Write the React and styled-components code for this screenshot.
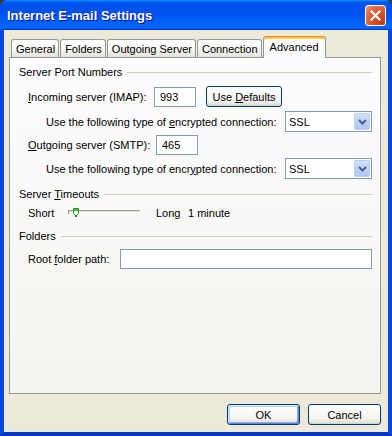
import React from 'react'
import styled, {createGlobalStyle, css} from 'styled-components'

const GlobalStyle = createGlobalStyle`
html, body {
  margin:0;
  padding:0;
  background:#3a3a3a;
}
body {
  font-family:"Liberation Sans", Arial, sans-serif;
  font-size:11px;
  color:#000;
}
u {
  text-underline-offset:1px;
}
`

const Window = styled.div`
width:392px;
height:436px;
display:flex;
flex-direction:column;
`

const TitleBar = styled.div`
height:30px;
flex:none;
box-sizing:border-box;
display:flex;
align-items:center;
justify-content:space-between;
padding:0 6px 0 7px;
border-radius:7px 7px 0 0;
background:linear-gradient(180deg, #0997ff, #0053ee 8%, #0050ee 40%, #0066ff 88%, #0066ff 93%, #005bff 95%, #003dd7 96%, #003dd7);
`

const Title = styled.div`
color:#fff;
font-weight:bold;
font-size:13px;
text-shadow:1px 1px 0 #0f1089;
margin-top:1px;
`

const CloseButton = styled.div`
width:21px;
height:21px;
box-sizing:border-box;
border:1px solid #fff;
border-radius:3px;
display:flex;
align-items:center;
justify-content:center;
background:radial-gradient(circle at 85% 85%, #c43a10 0%, #d9542a 45%, #e0704c 75%, #f0a88e 100%);
`

const Client = styled.div`
flex:1;
display:flex;
flex-direction:column;
background:#ece9d8;
border:4px solid #0a48dc;
border-top:none;
border-bottom-color:#0636c0;
padding:6px 7px 7px 5px;
`

const TabStrip = styled.div`
display:flex;
align-items:flex-end;
height:21px;
padding-left:2px;
`

const Tab = styled.div`
box-sizing:border-box;
height:18px;
padding:0 3px 0 4px;
margin-right:1px;
display:flex;
align-items:center;
border:1px solid #919b9c;
border-bottom:none;
border-radius:3px 3px 0 0;
background:linear-gradient(180deg, #ffffff 0%, #f4f4f0 55%, #e4e3dc 100%);
${p => p.$active && css`
  height:22px;
  margin-bottom:-1px;
  padding:0 6px 2px;
  position:relative;
  z-index:1;
  border-top:1px solid #e68b2c;
  background:#fcfcfe;
  box-shadow:inset 0 2px 0 #ffc83c;
`}
`

const Panel = styled.div`
flex:1;
box-sizing:border-box;
display:flex;
flex-direction:column;
border:1px solid #919b9c;
padding:7px 8px 0 9px;
background:linear-gradient(180deg, #fcfcfe 0%, #f4f3ee 100%);
`

const GroupHeader = styled.div`
display:flex;
align-items:center;
height:14px;
margin-top:${p => p.$top || 0}px;
&::after {
  content:'';
  flex:1;
  height:1px;
  margin-left:5px;
  background:#d0d0bf;
}
`

const Row = styled.div`
display:flex;
align-items:center;
height:${p => p.$h || 21}px;
margin-top:${p => p.$top || 0}px;
padding-left:${p => p.$indent || 9}px;
`

const Label = styled.span`
flex:none;
white-space:nowrap;
${p => p.$w && css`width:${p.$w}px;`}
${p => p.$left && css`margin-left:${p.$left}px;`}
`

const TextBox = styled.div`
box-sizing:border-box;
height:20px;
width:${p => p.$w ? p.$w + 'px' : 'auto'};
${p => p.$grow && css`flex:1;`}
display:flex;
align-items:center;
padding-left:5px;
border:1px solid #7f9db9;
background:#fff;
`

const Button = styled.div`
box-sizing:border-box;
width:${p => p.$w || 73}px;
height:21px;
margin-left:${p => p.$left || 0}px;
display:flex;
align-items:center;
justify-content:center;
white-space:pre;
border:1px solid #003c74;
border-radius:3px;
background:linear-gradient(180deg, #ffffff 0%, #f4f4f0 70%, #e6e4dc 90%, #d6d0c5 100%);
${p => p.$default && css`
  box-shadow:inset 1px 1px 0 #cee7ff, inset -1px -1px 0 #6982ee, inset 2px 2px 0 #bcd4f6, inset -2px -2px 0 #89ade4;
`}
`

const Select = styled.div`
box-sizing:border-box;
width:87px;
height:21px;
margin-left:auto;
display:flex;
align-items:center;
padding:1px;
border:1px solid #7f9db9;
background:#fff;
`

const SelectText = styled.span`
flex:1;
padding-left:2px;
`

const DropButton = styled.div`
box-sizing:border-box;
width:16px;
height:17px;
display:flex;
align-items:center;
justify-content:center;
border:1px solid #bccdf6;
border-radius:2px;
background:linear-gradient(180deg, #d4e1fd 0%, #bcd0fa 50%, #b0c6f6 100%);
`

const Footer = styled.div`
display:flex;
justify-content:flex-end;
gap:8px;
margin-top:10px;
`

function Chevron(){
    return (
        <svg width="9" height="6" viewBox="0 0 9 6">
            <polyline points="1,1 4.5,4.5 8,1" fill="none" stroke="#4d6185" strokeWidth="2"/>
        </svg>
    )
}

function Combo({value}){
    return (
        <Select>
            <SelectText>{value}</SelectText>
            <DropButton><Chevron/></DropButton>
        </Select>
    )
}

function Slider(){
    return (
        <svg width="72" height="10" viewBox="0 0 72 10">
            <rect x="0" y="2" width="72" height="1" fill="#9d9c99"/>
            <rect x="1" y="3" width="71" height="1" fill="#e2e1db"/>
            <rect x="0" y="4" width="72" height="1" fill="#ffffff"/>
            <rect x="0" y="2" width="1" height="4" fill="#9d9c99"/>
            <path d="M5.5 0.5 h5 v5 l-2.5 2.5 l-2.5 -2.5 z" fill="#fff" stroke="#1f8f1f" strokeWidth="1"/>
            <rect x="6" y="1" width="4" height="2" fill="#3cc63c"/>
            <rect x="7" y="7" width="2" height="2" fill="#1f7a1f"/>
        </svg>
    )
}

function CloseIcon(){
    return (
        <svg width="11" height="11" viewBox="0 0 11 11">
            <path d="M1.5 1.5 L9.5 9.5 M9.5 1.5 L1.5 9.5" stroke="#fff" strokeWidth="2.2" strokeLinecap="square"/>
        </svg>
    )
}

export default function App(){
    const tabs = ['General', 'Folders', 'Outgoing Server', 'Connection', 'Advanced']
    return (
        <Window>
            <GlobalStyle/>
            <TitleBar>
                <Title>Internet E-mail Settings</Title>
                <CloseButton><CloseIcon/></CloseButton>
            </TitleBar>
            <Client>
                <TabStrip>
                    {tabs.map(t => <Tab key={t} $active={t === 'Advanced'}>{t}</Tab>)}
                </TabStrip>
                <Panel>
                    <GroupHeader><span>Server Port Numbers</span></GroupHeader>
                    <Row $top={7}>
                        <Label $w={126}><u>I</u>ncoming server (IMAP):</Label>
                        <TextBox $w={42}>993</TextBox>
                        <Button $w={76} $left={10}><span>Use <u>D</u>efaults</span></Button>
                    </Row>
                    <Row $top={4} $indent={27}>
                        <Label>Use the following type of <u>e</u>ncrypted connection:</Label>
                        <Combo value="SSL"/>
                    </Row>
                    <Row $top={3} $h={20}>
                        <Label $w={128}><u>O</u>utgoing server (SMTP):</Label>
                        <TextBox $w={42}>465</TextBox>
                    </Row>
                    <Row $top={3} $indent={27}>
                        <Label>Use the following type of encr<u>y</u>pted connection:</Label>
                        <Combo value="SSL"/>
                    </Row>
                    <GroupHeader $top={8}><span>Server <u>T</u>imeouts</span></GroupHeader>
                    <Row $top={4} $h={16}>
                        <Label $w={40}>Short</Label>
                        <Slider/>
                        <Label $w={32} $left={16}>Long</Label>
                        <Label>1 minute</Label>
                    </Row>
                    <GroupHeader $top={8}><span>Folders</span></GroupHeader>
                    <Row $top={6} $h={20}>
                        <Label $w={92}>Root <u>f</u>older path:</Label>
                        <TextBox $grow/>
                    </Row>
                </Panel>
                <Footer>
                    <Button $default>OK</Button>
                    <Button>Cancel</Button>
                </Footer>
            </Client>
        </Window>
    )
}
